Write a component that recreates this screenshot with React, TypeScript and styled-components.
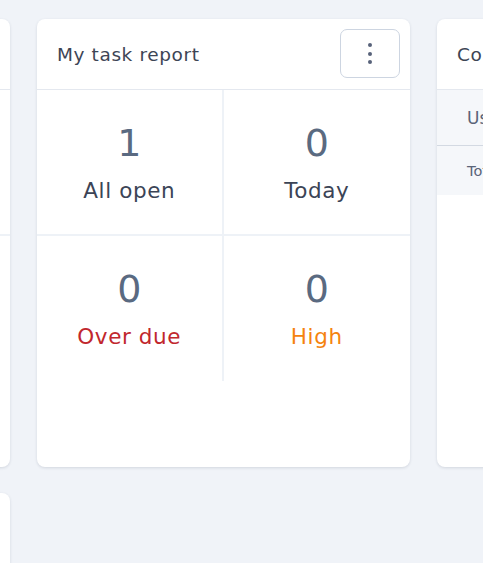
import React from "react";
import styled, { createGlobalStyle } from "styled-components";

const Global = createGlobalStyle`
  html, body { margin: 0; padding: 0; }
  body {
    background: #f0f3f8;
    font-family: "DejaVu Sans", "Open Sans", sans-serif;
    overflow: hidden;
    width: 483px;
    height: 563px;
  }
`;

const Board = styled.div`
  display: grid;
  grid-template-columns: repeat(3, 373px);
  grid-auto-rows: 448px;
  column-gap: 27px;
  row-gap: 26px;
  padding-top: 19px;
  margin-left: -363px;
`;

const Card = styled.section`
  background: #fff;
  border-radius: 8px;
  box-shadow: 0 1px 3px rgba(30, 45, 70, 0.14);
  display: flex;
  flex-direction: column;
  overflow: hidden;
`;

const Header = styled.header`
  height: 71px;
  box-sizing: border-box;
  border-bottom: 1px solid #e4e8ef;
  display: flex;
  align-items: center;
  justify-content: space-between;
  padding: 0 10px 0 20px;
  flex-shrink: 0;
`;

const Title = styled.h2`
  margin: 0;
  font-size: 18.5px;
  letter-spacing: 0.6px;
  font-weight: 400;
  color: #3d4555;
  white-space: nowrap;
`;

const MenuButton = styled.button`
  width: 60px;
  height: 49px;
  margin-top: -1px;
  border: 1px solid #cdd5e1;
  border-radius: 7px;
  background: #fff;
  display: flex;
  flex-direction: column;
  align-items: center;
  justify-content: center;
  gap: 4.5px;
  padding: 0;
`;

const Dot = styled.span`
  width: 4px;
  height: 4px;
  border-radius: 50%;
  background: #58627a;
`;

const StatGrid = styled.div`
  display: grid;
  grid-template-columns: 1fr 1fr;
  grid-template-rows: 146px 145px;
`;

const Cell = styled.div<{ $right?: boolean; $bottom?: boolean }>`
  border-right: ${(p) => (p.$right ? "2px solid #eef2f7" : "none")};
  border-bottom: ${(p) => (p.$bottom ? "2px solid #eef2f7" : "none")};
  display: flex;
  flex-direction: column;
  align-items: center;
  padding-top: 29px;
  box-sizing: border-box;
`;

const Count = styled.div`
  font-size: 38px;
  line-height: 48px;
  color: #5a6a81;
`;

const Label = styled.div<{ $tone: string }>`
  font-size: 21.5px;
  letter-spacing: 0.6px;
  line-height: 28px;
  margin-top: 10px;
  color: ${(p) => p.$tone};
  white-space: nowrap;
`;

const Table = styled.table`
  border-collapse: collapse;
  width: 100%;
`;

const HeadCell = styled.th`
  background: #f5f7fa;
  height: 55px;
  border-bottom: 1px solid #d3d9e2;
  text-align: left;
  padding: 0 0 0 30px;
  font-size: 17px;
  font-weight: 400;
  color: #5a6478;
  white-space: nowrap;
`;

const BodyCell = styled.td`
  background: #f5f7fa;
  height: 49px;
  padding: 0 0 0 30px;
  font-size: 14.5px;
  color: #5a6478;
  white-space: nowrap;
`;

type Stat = { count: number; label: string; tone: string };

const stats: Stat[] = [
  { count: 1, label: "All open", tone: "#3b4456" },
  { count: 0, label: "Today", tone: "#3b4456" },
  { count: 0, label: "Over due", tone: "#c1272d" },
  { count: 0, label: "High", tone: "#f5830f" },
];

function Menu() {
  return (
    <MenuButton aria-label="More">
      <Dot />
      <Dot />
      <Dot />
    </MenuButton>
  );
}

function StatCard({ title, items }: { title: string; items: Stat[] }) {
  return (
    <Card>
      <Header>
        <Title>{title}</Title>
        <Menu />
      </Header>
      <StatGrid>
        {items.map((s, i) => (
          <Cell key={i} $right={i % 2 === 0} $bottom={i < 2}>
            <Count>{s.count}</Count>
            <Label $tone={s.tone}>{s.label}</Label>
          </Cell>
        ))}
      </StatGrid>
    </Card>
  );
}

export default function App() {
  return (
    <>
      <Global />
      <Board>
        <Card>
          <Header>
            <span />
            <Menu />
          </Header>
          <StatGrid>
            <Cell $right $bottom />
            <Cell $bottom />
            <Cell $right />
            <Cell />
          </StatGrid>
        </Card>
        <StatCard title="My task report" items={stats} />
        <Card>
          <Header>
            <Title>Completed tasks</Title>
          </Header>
          <Table>
            <thead>
              <tr>
                <HeadCell>User</HeadCell>
              </tr>
            </thead>
            <tbody>
              <tr>
                <BodyCell>Total</BodyCell>
              </tr>
            </tbody>
          </Table>
        </Card>
        <Card />
      </Board>
    </>
  );
}
